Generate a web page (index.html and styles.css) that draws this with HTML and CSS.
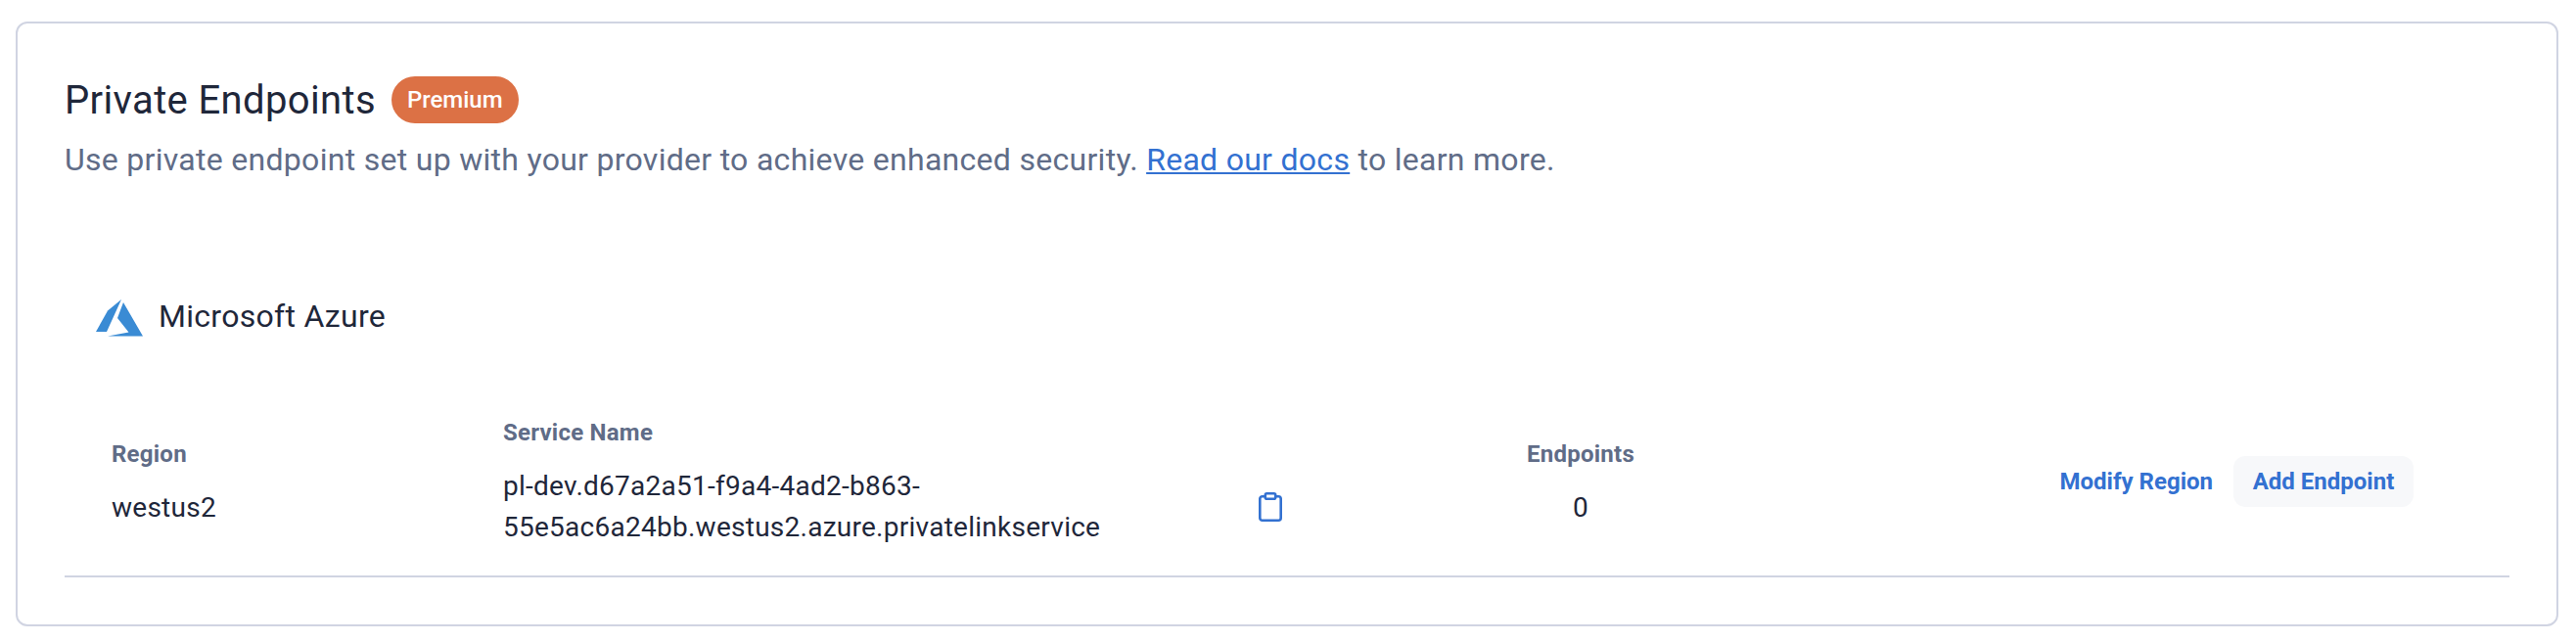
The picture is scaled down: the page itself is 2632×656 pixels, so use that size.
FILE: index.html
```html
<!DOCTYPE html>
<html lang="en">
<head>
<meta charset="utf-8">
<title>Private Endpoints</title>
<link rel="stylesheet" href="styles.css">
</head>
<body>
<section class="card">
  <header class="heading">
    <h1 class="title">Private Endpoints</h1>
    <span class="pill">Premium</span>
  </header>
  <p class="description">Use private endpoint set up with your provider to achieve enhanced security. <a class="link" href="#">Read our docs</a> to learn more.</p>
  <div class="provider">
    <svg class="azure" viewBox="0 0 48 38" fill="#3a8bd4"><path d="M26 0 12 11.500 0 33h11z"/><path d="M28 3 22 19 33.500 33.500 12 37.500H48z"/></svg>
    <h2 class="provider-name">Microsoft Azure</h2>
  </div>
  <div class="row">
    <div class="cell cell-short">
      <div class="label">Region</div>
      <div class="value">westus2</div>
    </div>
    <div class="cell">
      <div class="label">Service Name</div>
      <div class="service">
        <div class="value">pl-dev.d67a2a51-f9a4-4ad2-b863-<br>55e5ac6a24bb.westus2.azure.privatelinkservice</div>
        <svg class="copy" viewBox="0 0 24 30" fill="none" stroke="#3371d1" stroke-width="2.600"><rect x="1.300" y="4.300" width="21.400" height="24.400" rx="2.500"/><rect x="6.800" y="1.300" width="10.400" height="5.400" rx="1.500" fill="#fff"/></svg>
      </div>
    </div>
    <div class="cell cell-short cell-count">
      <div class="label">Endpoints</div>
      <div class="value">0</div>
    </div>
    <div class="actions">
      <button class="button">Modify Region</button>
      <button class="button button-filled">Add Endpoint</button>
    </div>
  </div>
</section>
</body>
</html>
```
FILE: styles.css
```css
* { box-sizing: border-box; }
body {
  margin: 0;
  padding: 22px 18px 16px 16px;
  height: 656px;
  background: #fff;
  color: #1f273a;
  font-family: Roboto, sans-serif;
}
h1, h2, p { margin: 0; font-weight: 400; }
.card {
  height: 618px;
  padding: 54px 48px 0;
  border: 2px solid #d0d4e2;
  border-radius: 12px;
}
.heading { display: flex; align-items: center; gap: 16px; height: 48px; }
.title { padding-top: 2px; font-size: 40px; line-height: 48px; letter-spacing: 0.36px; }
.pill {
  padding: 0 16px;
  border-radius: 24px;
  background: #dc7145;
  color: #fff;
  font-size: 24px;
  font-weight: 500;
  line-height: 48px;
}
.description { margin-top: 13px; color: #606c87; font-size: 32px; line-height: 48px; letter-spacing: 0.29px; }
.link { color: #3371d1; text-decoration: underline; text-decoration-thickness: 2px; text-underline-offset: 2px; }
.provider { display: flex; align-items: center; gap: 16px; height: 48px; margin-top: 112px; padding-left: 32px; }
.azure { width: 48px; height: 38px; margin-top: 4px; }
.provider-name { font-size: 32px; line-height: 48px; letter-spacing: 0.29px; }
.row {
  display: grid;
  grid-template-columns: 400px 800px 602px 1fr;
  align-items: center;
  height: 194px;
  margin-top: 49px;
  padding: 0 98px 0 48px;
  border-bottom: 2px solid #d0d4e2;
}
.label { margin-bottom: 16px; color: #606c87; font-size: 24px; font-weight: 700; line-height: 36px; letter-spacing: 0.24px; }
.value { font-size: 28px; line-height: 42px; letter-spacing: 0.26px; }
.service { display: flex; align-items: center; justify-content: space-between; padding-right: 4px; }
.copy { width: 24px; height: 30px; }
.cell-short { padding-top: 2px; }
.cell-count { text-align: center; }
.actions { display: flex; justify-content: flex-end; gap: 1px; }
.button {
  height: 52px;
  padding: 0 20px;
  border: 0;
  border-radius: 12px;
  background: none;
  color: #3371d1;
  font: 700 24px/52px Roboto, sans-serif;
  white-space: nowrap;
}
.button-filled { width: 184px; padding: 0; background: #f7f8fa; }
```
